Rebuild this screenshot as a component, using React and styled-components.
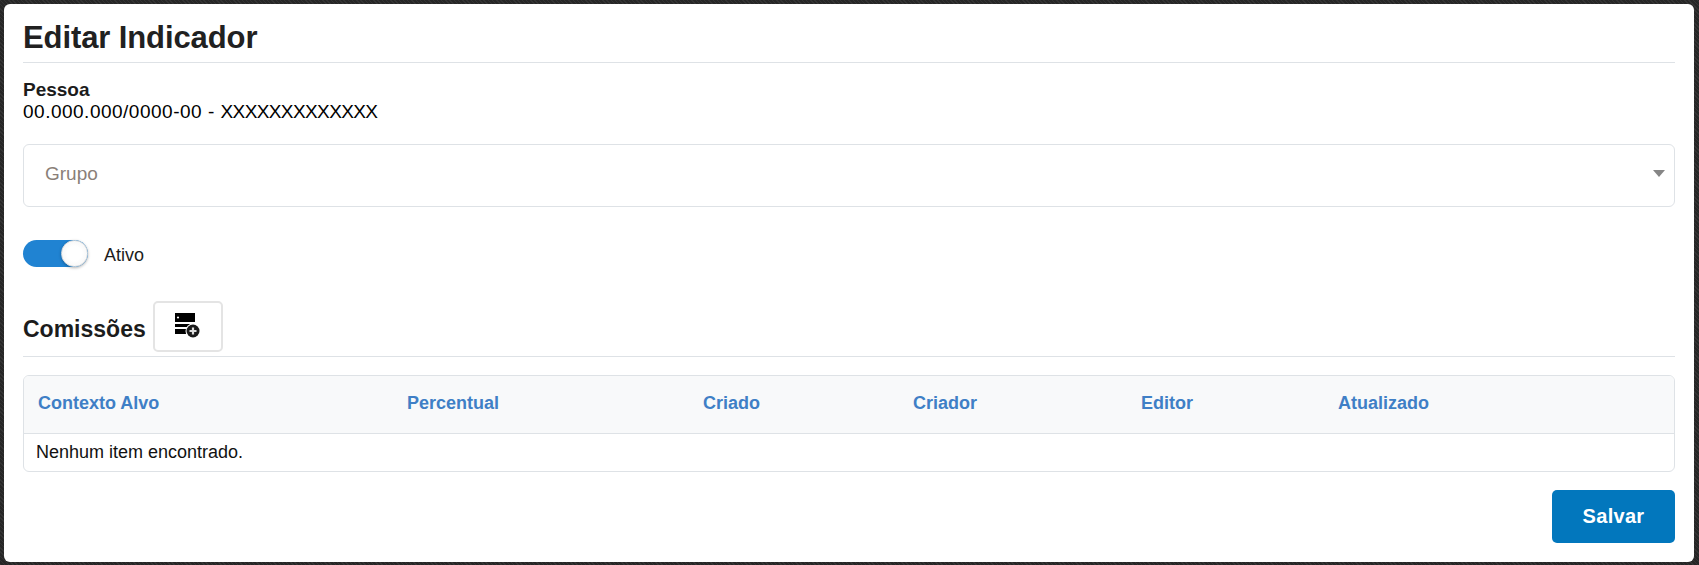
import React from 'react'
import styled, { createGlobalStyle } from 'styled-components'

const GlobalStyle = createGlobalStyle`
  html, body {
    margin: 0;
    padding: 0;
    background: #2a2a2a;
  }
  * {
    box-sizing: border-box;
  }
`

const Page = styled.div`
  height: 565px;
  padding: 4px 5px 3px 4px;
  background-color: #2b2b2b;
  background-image: repeating-linear-gradient(45deg, #333 0 1px, #262626 1px 3px);
  font-family: "Liberation Sans", Arial, sans-serif;
  color: #1c1c1c;
`

const Card = styled.main`
  height: 558px;
  padding: 9px 19px 18px;
  background: #fff;
  border-radius: 6px;
  display: flex;
  flex-direction: column;
`

const Title = styled.h1`
  margin: 0;
  height: 50px;
  line-height: 50px;
  font-size: 31px;
  font-weight: 700;
  letter-spacing: -0.1px;
  color: #212121;
  border-bottom: 1px solid #dee2e6;
`

const PersonBlock = styled.div`
  margin-top: 16px;
  font-size: 19px;
  line-height: 22px;
  color: #000;
`

const FieldLabel = styled.div`
  font-weight: 700;
  font-size: 19px;
  color: #1c1c1c;
`

const DocNumber = styled.span`
  letter-spacing: 0.5px;
`

const DocName = styled.span`
  letter-spacing: -0.6px;
`

const SelectBox = styled.div`
  margin-top: 21px;
  height: 63px;
  padding: 0 9px 4px 21px;
  border: 1px solid #dee2e6;
  border-radius: 6px;
  display: flex;
  align-items: center;
  justify-content: space-between;
  font-size: 19px;
  color: #8a7f78;
`

const Caret = styled.span`
  width: 0;
  height: 0;
  border-left: 6px solid transparent;
  border-right: 6px solid transparent;
  border-top: 7px solid #868686;
`

const SwitchRow = styled.div`
  margin-top: 33px;
  display: flex;
  align-items: center;
  gap: 16px;
  font-size: 18px;
  color: #1c1c1c;
`

const SwitchLabel = styled.span`
  padding-top: 3px;
`

const SwitchTrack = styled.span`
  position: relative;
  display: block;
  width: 65px;
  height: 27px;
  border-radius: 14px;
  background: #2083d2;
`

const SwitchKnob = styled.span`
  position: absolute;
  top: 0;
  right: 0;
  width: 27px;
  height: 27px;
  border-radius: 50%;
  background: radial-gradient(circle, #fff 40%, #f2f2f2 100%);
  border: 1px solid #ddd;
  box-shadow: 0 1px 3px rgba(0, 0, 0, 0.3);
`

const SectionHead = styled.div`
  margin-top: 34px;
  padding-bottom: 4px;
  display: flex;
  align-items: center;
  gap: 7px;
  border-bottom: 1px solid #dee2e6;
`

const SectionTitle = styled.h2`
  margin: 6px 0 0;
  font-size: 23px;
  font-weight: 700;
  color: #1c1c1c;
`

const IconButton = styled.button`
  width: 70px;
  height: 51px;
  padding: 0 0 3px;
  background: #fff;
  border: 2px solid #e4e4e4;
  border-radius: 5px;
  display: flex;
  align-items: center;
  justify-content: center;
`

const TableWrap = styled.div`
  margin-top: 18px;
  border: 1px solid #dee2e6;
  border-radius: 6px;
  overflow: hidden;
`

const Table = styled.table`
  width: 100%;
  border-collapse: collapse;
  table-layout: fixed;
`

const HeadRow = styled.tr`
  height: 57px;
  background: #f8f9fa;
  border-bottom: 1px solid #dee2e6;
`

const HeadCell = styled.th`
  padding: 0 0 2px 14px;
  width: ${p => p.$w}px;
  text-align: left;
  font-size: 18px;
  font-weight: 700;
  color: #3f7fc6;
`

const EmptyCell = styled.td`
  height: 38px;
  padding: 0 12px;
  font-size: 18px;
  color: #111;
`

const Footer = styled.div`
  margin-top: 18px;
  display: flex;
  justify-content: flex-end;
`

const SaveButton = styled.button`
  width: 123px;
  height: 53px;
  border: none;
  border-radius: 5px;
  background: #0277bd;
  color: #fff;
  font-family: inherit;
  font-size: 20px;
  font-weight: 700;
  letter-spacing: 0.3px;
`

function ServerPlusIcon() {
  return (
    <svg width="25" height="25" viewBox="0 0 25 25">
      <path d="M0 0h20v9H0z M0 11h20v3H0z M0 16h13v5H0z" fill="#000" />
      <circle cx="3" cy="4.5" r="1.1" fill="#fff" />
      <circle cx="18" cy="18" r="7.5" fill="#fff" />
      <circle cx="18" cy="18" r="6.5" fill="#1a1a1a" />
      <path d="M18 14.5v7M14.5 18h7" stroke="#ddd" strokeWidth="2.2" />
    </svg>
  )
}

const columns = [
  { label: 'Contexto Alvo', w: 369 },
  { label: 'Percentual', w: 296 },
  { label: 'Criado', w: 210 },
  { label: 'Criador', w: 228 },
  { label: 'Editor', w: 197 },
  { label: 'Atualizado' },
]

export default function App() {
  return (
    <Page>
      <GlobalStyle />
      <Card>
        <Title>Editar Indicador</Title>
        <PersonBlock>
          <FieldLabel>Pessoa</FieldLabel>
          <DocNumber>00.000.000/0000-00 - </DocNumber>
          <DocName>XXXXXXXXXXXXX</DocName>
        </PersonBlock>
        <SelectBox>
          Grupo
          <Caret />
        </SelectBox>
        <SwitchRow>
          <SwitchTrack>
            <SwitchKnob />
          </SwitchTrack>
          <SwitchLabel>Ativo</SwitchLabel>
        </SwitchRow>
        <SectionHead>
          <SectionTitle>Comissões</SectionTitle>
          <IconButton>
            <ServerPlusIcon />
          </IconButton>
        </SectionHead>
        <TableWrap>
          <Table>
            <thead>
              <HeadRow>
                {columns.map(c => (
                  <HeadCell key={c.label} $w={c.w}>{c.label}</HeadCell>
                ))}
              </HeadRow>
            </thead>
            <tbody>
              <tr>
                <EmptyCell colSpan={6}>Nenhum item encontrado.</EmptyCell>
              </tr>
            </tbody>
          </Table>
        </TableWrap>
        <Footer>
          <SaveButton>Salvar</SaveButton>
        </Footer>
      </Card>
    </Page>
  )
}
